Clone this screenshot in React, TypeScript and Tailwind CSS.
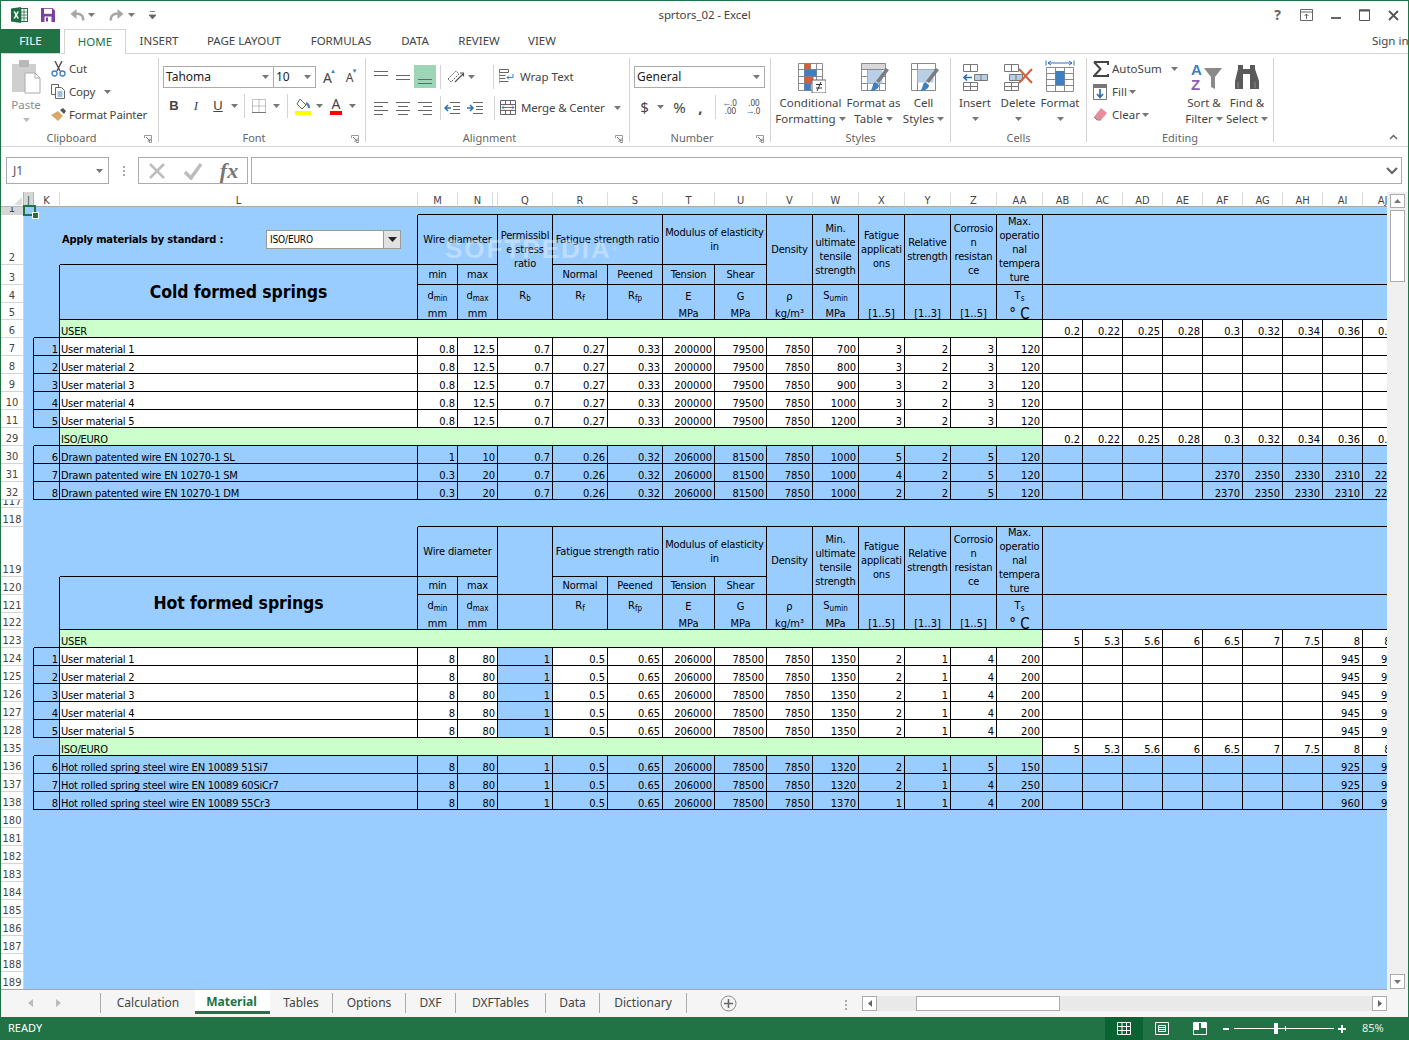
import React from 'react';

function Caret({ className = '' }: { className?: string }) {
  return (
    <svg width="7" height="4" viewBox="0 0 7 4" className={`shrink-0 ${className}`}>
      <path d="M0 0h7L3.5 4z" fill="#777" />
    </svg>
  );
}

function Launcher() {
  return (
    <svg width="8" height="8" viewBox="0 0 8 8" className="absolute right-[6px] bottom-[-1px]">
      <path d="M.5 3V.5H7.5V7.5H5" fill="none" stroke="#999" />
      <path d="M2 2l4 4M6 3.500V6H3.500" fill="none" stroke="#777" />
    </svg>
  );
}

function Vsep({ className = 'h-[20px]' }: { className?: string }) {
  return <span className={`w-px bg-[#d4d4d4] shrink-0 ${className}`} />;
}

function Slot({ w, children }: { w: string; children?: React.ReactNode }) {
  return <span className={`flex items-center justify-center shrink-0 ${w}`}>{children}</span>;
}

function Lines({ y, x }: { y: number[]; x: [number, number][] }) {
  return (
    <svg width="16" height="16" viewBox="0 0 16 16">
      {y.map((v, i) => (
        <path key={i} d={`M${x[i % x.length][0]} ${v}.5H${x[i % x.length][1]}`} stroke="#666" />
      ))}
    </svg>
  );
}

function BigButton({ w, icon, one, two }: { w: string; icon: React.ReactNode; one: string; two?: string }) {
  return (
    <div className={`flex flex-col items-center shrink-0 whitespace-nowrap ${w}`}>
      <div className="h-[30px] mt-[4px] flex items-center justify-center">{icon}</div>
      <div className="mt-[3px] leading-[16px]">{one}</div>
      <div className="leading-[16px] flex items-center gap-[3px] h-[16px]">
        {two}
        <Caret />
      </div>
    </div>
  );
}

function Group({ w, label, launcher, children }: { w: string; label: string; launcher?: boolean; children: React.ReactNode }) {
  return (
    <section className={`relative flex flex-col h-[84px] border-r border-[#d4d4d4] shrink-0 ${w}`}>
      <div className="flex-1 min-h-0">{children}</div>
      <div className={`h-[8px] leading-[8px] text-center text-[11px] text-[#666] ${launcher ? 'pr-[16px]' : ''}`}>{label}</div>
      {launcher && <Launcher />}
    </section>
  );
}

function Dropdown({ w, text }: { w: string; text: string }) {
  return (
    <div className={`h-[22px] border border-[#ababab] bg-white flex items-center justify-between pl-[2px] pr-[4px] text-[12px] text-[#222] shrink-0 ${w}`}>
      {text}
      <Caret />
    </div>
  );
}

function TitleBar() {
  return (
    <div className="h-[28px] grid grid-cols-[1fr_auto_1fr] items-center shrink-0">
      <div className="flex items-center pl-[10px]">
        <svg width="17" height="16" viewBox="0 0 17 16">
          <rect x="7" y="1.500" width="9.500" height="13" fill="#fff" stroke="#217346" />
          <path d="M10 1.500v13M13 1.500v13M7 5h9.500M7 8h9.500M7 11h9.500" stroke="#217346" strokeWidth=".8" />
          <path d="M0 1.500L10 0v16L0 14.500z" fill="#1d6f42" />
          <path d="M2.500 4.500h1.800L5.200 6.800 6.200 4.500H8L6.100 8 8 11.500H6.200L5.200 9.200 4.200 11.500H2.500L4.300 8z" fill="#fff" />
        </svg>
        <svg width="16" height="16" viewBox="0 0 16 16" className="ml-[12px]">
          <path d="M1 1h11.500L15 3.500V15H1z" fill="#7b3f9d" />
          <rect x="4" y="1.800" width="8" height="5" fill="#fff" />
          <rect x="4.500" y="9.500" width="7" height="5.500" fill="#fff" />
          <rect x="6" y="10.500" width="2" height="4" fill="#7b3f9d" />
        </svg>
        <svg width="16" height="14" viewBox="0 0 16 14" className="ml-[13px]">
          <path d="M14 12.500c1-5-3-7.500-8.500-6.500" fill="none" stroke="#a6a6a6" strokeWidth="2.500" />
          <path d="M7.500 1L1.500 6l6 5z" fill="#a6a6a6" />
        </svg>
        <Caret className="ml-[3px]" />
        <svg width="16" height="14" viewBox="0 0 16 14" className="ml-[14px]">
          <path d="M2 12.500c-1-5 3-7.500 8.500-6.500" fill="none" stroke="#a6a6a6" strokeWidth="2.500" />
          <path d="M8.500 1l6 5-6 5z" fill="#a6a6a6" />
        </svg>
        <Caret className="ml-[3px]" />
        <svg width="7" height="9" viewBox="0 0 7 9" className="ml-[14px]">
          <path d="M1 .5h5M0 4h7l-3.500 4z" stroke="#666" fill="#666" strokeWidth=".8" />
        </svg>
      </div>
      <div className="text-[11.5px] text-[#444] tracking-[-0.1px]">sprtors_02 - Excel</div>
      <div className="flex items-center justify-end text-[#666]">
        <span className="w-[29px] text-center text-[14px] font-bold leading-none">?</span>
        <Slot w="w-[29px]">
          <svg width="13" height="12" viewBox="0 0 13 12"><path d="M.5.500h12v11H.500zM.5 3h12M6.500 10V5M4.500 7l2-2 2 2" fill="none" stroke="#666" /></svg>
        </Slot>
        <Slot w="w-[29px]">
          <svg width="10" height="10" viewBox="0 0 10 10"><path d="M0 8h10" stroke="#666" strokeWidth="2" /></svg>
        </Slot>
        <Slot w="w-[29px]">
          <svg width="11" height="12" viewBox="0 0 11 12"><path d="M.5 1h10v10.500H.5z" fill="none" stroke="#555" /><path d="M0 1.500h11" stroke="#555" strokeWidth="2" /></svg>
        </Slot>
        <Slot w="w-[29px]">
          <svg width="11" height="11" viewBox="0 0 11 11"><path d="M1 1l9 9M10 1l-9 9" stroke="#555" strokeWidth="1.800" /></svg>
        </Slot>
      </div>
    </div>
  );
}

function TabRow() {
  const tabs: [string, string][] = [
    ['INSERT', 'w-[66px]'],
    ['PAGE LAYOUT', 'w-[104px]'],
    ['FORMULAS', 'w-[90px]'],
    ['DATA', 'w-[58px]'],
    ['REVIEW', 'w-[70px]'],
    ['VIEW', 'w-[56px]'],
  ];
  return (
    <div className="h-[25px] flex items-stretch border-b border-[#d4d4d4] text-[11.5px] text-[#444] shrink-0">
      <div className="w-[59px] bg-[#217346] text-white flex items-center justify-center">FILE</div>
      <div className="ml-[4px] w-[62px] h-[25px] bg-white border-x border-t border-[#d4d4d4] text-[#217346] flex items-center justify-center">HOME</div>
      {tabs.map(([t, w]) => (
        <div key={t} className={`flex items-center justify-center ${w}`}>{t}</div>
      ))}
      <div className="ml-auto w-[36px] overflow-hidden whitespace-nowrap flex items-center">Sign in</div>
    </div>
  );
}

function Clipboard() {
  return (
    <div className="flex">
      <div className="ml-[8px] w-[34px] flex flex-col items-center">
        <svg width="30" height="34" viewBox="0 0 30 34" className="mt-[2px]">
          <rect x="1" y="4" width="24" height="28" fill="#d0cfd0" />
          <rect x="8" y="0" width="10" height="7" fill="#b9b8b9" />
          <path d="M14 13h10l5 5v15H14z" fill="#fff" stroke="#aaa" />
          <path d="M24 13v5h5" fill="none" stroke="#aaa" />
        </svg>
        <div className="text-[11.5px] text-[#8b8b8b] leading-[16px] mt-[3px]">Paste</div>
        <Caret className="mt-[5px] opacity-50" />
      </div>
      <div className="ml-[8px] -mt-[1px] text-[11.5px] text-[#444] tracking-[-0.2px]">
        <div className="h-[23px] flex items-center">
          <svg width="15" height="16" viewBox="0 0 15 16" className="mr-[3px]">
            <path d="M4 0l5 10M11 0L6 10" stroke="#555" strokeWidth="1.500" />
            <circle cx="3.500" cy="12.500" r="2.500" fill="none" stroke="#3d7fc1" strokeWidth="1.300" />
            <circle cx="11.500" cy="12.500" r="2.500" fill="none" stroke="#3d7fc1" strokeWidth="1.300" />
          </svg>
          Cut
        </div>
        <div className="h-[23px] flex items-center">
          <svg width="15" height="15" viewBox="0 0 15 15" className="mr-[3px]">
            <path d="M.5.500h7v3M.5.500v10h4" fill="#fff" stroke="#666" />
            <path d="M4.500 3.500h6l3 3v8h-9z" fill="#fff" stroke="#666" />
            <path d="M6.500 8h5M6.500 10h5M6.500 12h5" stroke="#3d7fc1" />
          </svg>
          Copy
          <Caret className="ml-[9px]" />
        </div>
        <div className="h-[23px] flex items-center">
          <svg width="16" height="14" viewBox="0 0 16 14" className="mr-[2px]">
            <path d="M0 7l7-4 5 5-5 5z" fill="#d7a86a" />
            <path d="M9 2l3-2 3 3-2 3z" fill="#555" />
          </svg>
          Format Painter
        </div>
      </div>
    </div>
  );
}

function FontGroup() {
  return (
    <div className="pl-[4px] pt-[8px]">
      <div className="flex items-center">
        <Dropdown w="w-[111px]" text="Tahoma" />
        <Dropdown w="w-[43px] -ml-px" text="10" />
        <Slot w="w-[23px] text-[14px] text-[#444]">
          <span className="relative">A<span className="absolute -right-[4px] top-0 text-[6px] text-[#3d7fc1]">▲</span></span>
        </Slot>
        <Slot w="w-[21px] text-[12px] text-[#444]">
          <span className="relative mt-[2px]">A<span className="absolute -right-[4px] -top-[2px] text-[6px] text-[#3d7fc1]">▼</span></span>
        </Slot>
      </div>
      <div className="flex items-center mt-[8px] h-[20px] text-[12px] text-[#444]">
        <Slot w="w-[22px] font-bold font-['Liberation_Sans',sans-serif] text-[13px]">B</Slot>
        <Slot w="w-[22px] italic font-['Liberation_Serif',serif] text-[13px]">I</Slot>
        <Slot w="w-[22px] underline font-['Liberation_Sans',sans-serif] text-[13px]">U</Slot>
        <Caret className="ml-[2px]" />
        <span className="w-[6px]" />
        <Vsep className="h-[24px]" />
        <Slot w="w-[28px]">
          <svg width="14" height="14" viewBox="0 0 14 14"><path d="M.5.500h13v13H.500zM7 .5v13M.5 7h13" fill="none" stroke="#888" strokeDasharray="1 1" /><path d="M0 13.500h14" stroke="#777" /></svg>
        </Slot>
        <Caret />
        <span className="w-[7px]" />
        <Vsep className="h-[24px]" />
        <Slot w="w-[30px]">
          <svg width="16" height="18" viewBox="0 0 16 18">
            <path d="M5 2l6 6-4 4-5-5z" fill="#fff" stroke="#666" />
            <path d="M11 6c2 1 3 3 3 5" fill="none" stroke="#3d7fc1" strokeWidth="2" />
            <rect x="0" y="14" width="16" height="4" fill="#ffff00" />
          </svg>
        </Slot>
        <Caret className="-ml-[2px]" />
        <Slot w="w-[26px]">
          <span className="relative text-[14px] leading-[14px] pb-[4px] px-[2px]">
            A<span className="absolute left-0 right-0 bottom-0 h-[4px] bg-[#ff0000]" />
          </span>
        </Slot>
        <Caret />
      </div>
    </div>
  );
}

function AlignmentGroup() {
  return (
    <div className="pl-[4px] pt-[7px] text-[11.5px] text-[#444]">
      <div className="flex items-center h-[23px]">
        <Slot w="w-[22px]"><Lines y={[2, 6]} x={[[1, 15]]} /></Slot>
        <Slot w="w-[22px]"><Lines y={[6, 10]} x={[[1, 15]]} /></Slot>
        <Slot w="w-[22px] h-[23px] bg-[#9fd5b7]"><Lines y={[10, 14]} x={[[1, 15]]} /></Slot>
        <span className="w-[4px]" />
        <Vsep className="h-[24px]" />
        <Slot w="w-[30px]">
          <svg width="18" height="16" viewBox="0 0 18 16">
            <path d="M1 10l8-8 3 3-8 8z" fill="none" stroke="#666" strokeDasharray="2 1" />
            <path d="M8 13l8-8M13 4h3.500v3.500" fill="none" stroke="#555" strokeWidth="1.200" />
          </svg>
        </Slot>
        <Caret className="-ml-[3px]" />
        <span className="w-[18px]" />
        <Vsep className="h-[24px]" />
        <Slot w="w-[26px]">
          <svg width="16" height="15" viewBox="0 0 16 15">
            <path d="M.5.500h9v3h-9zM.5 6.500h6M.5 9.500h6M.5 12.500h9" fill="none" stroke="#666" />
            <path d="M0 .5v14" stroke="#666" />
            <path d="M14 5v3.500H8M10 6.500l-2 2 2 2" fill="none" stroke="#3d7fc1" />
          </svg>
        </Slot>
        Wrap Text
      </div>
      <div className="flex items-center h-[23px] mt-[8px]">
        <Slot w="w-[22px]"><Lines y={[2, 6, 10, 14]} x={[[1, 15], [1, 10]]} /></Slot>
        <Slot w="w-[22px]"><Lines y={[2, 6, 10, 14]} x={[[1, 15], [3, 13]]} /></Slot>
        <Slot w="w-[22px]"><Lines y={[2, 6, 10, 14]} x={[[1, 15], [6, 15]]} /></Slot>
        <span className="w-[4px]" />
        <Vsep className="h-[24px]" />
        <Slot w="w-[22px]">
          <svg width="16" height="12" viewBox="0 0 16 12"><path d="M6 .5h10M9 4.500h7M9 7.500h7M6 11.500h10" stroke="#666" /><path d="M7 6H1M4 3L1 6l3 3" fill="none" stroke="#2a70b8" strokeWidth="1.500" /></svg>
        </Slot>
        <Slot w="w-[24px]">
          <svg width="16" height="12" viewBox="0 0 16 12"><path d="M6 .5h10M9 4.500h7M9 7.500h7M6 11.500h10" stroke="#666" /><path d="M0 6h6M3 3l3 3-3 3" fill="none" stroke="#2a70b8" strokeWidth="1.500" /></svg>
        </Slot>
        <span className="w-[7px]" />
        <Vsep className="h-[24px]" />
        <Slot w="w-[26px]">
          <svg width="16" height="15" viewBox="0 0 16 15">
            <path d="M.5.500h15v14H.500zM.5 4.500h15M.5 10.500h15M5.500.5v4M10.500.5v4M5.500 10.500v4M10.500 10.500v4" fill="none" stroke="#666" />
            <path d="M2 7.500h12M4 5.500l-2 2 2 2M12 5.500l2 2-2 2" fill="none" stroke="#3d7fc1" />
          </svg>
        </Slot>
        <span className="tracking-[-0.15px]">Merge &amp; Center</span>
        <Caret className="ml-[9px]" />
      </div>
    </div>
  );
}

function NumberGroup() {
  return (
    <div className="pl-[4px] pt-[8px] text-[#444]">
      <Dropdown w="w-[131px]" text="General" />
      <div className="flex items-center mt-[8px] h-[22px] text-[15px]">
        <Slot w="w-[21px]">$</Slot>
        <Caret className="ml-[2px]" />
        <Slot w="w-[31px]">%</Slot>
        <Slot w="w-[11px] font-bold">,</Slot>
        <span className="w-[9px]" />
        <Vsep className="h-[24px]" />
        <Slot w="w-[27px]">
          <span className="relative text-[8px] leading-[8px] text-center">
            <span className="block pl-[8px]">.0</span>
            <span className="block pl-[2px]">.00</span>
            <span className="absolute left-0 top-0 text-[#2a70b8] text-[9px]">←</span>
          </span>
        </Slot>
        <Slot w="w-[20px]">
          <span className="relative text-[8px] leading-[8px] text-center">
            <span className="block pl-[2px]">.00</span>
            <span className="block pl-[8px]">.0</span>
            <span className="absolute left-0 bottom-0 text-[#2a70b8] text-[9px]">→</span>
          </span>
        </Slot>
      </div>
    </div>
  );
}

function Grid5({ children }: { children?: React.ReactNode }) {
  return (
    <svg width="31" height="31" viewBox="0 0 31 31">
      <path d="M3.500 1.500h24v27h-24zM3.500 7.500h24M3.500 14.500h24M3.500 21.500h24M9.500 1.500v27M15.500 1.500v27M21.500 1.500v27" fill="#fff" stroke="#8a8a8a" />
      {children}
    </svg>
  );
}

function Brush() {
  return (
    <g>
      <path d="M31 8L21 21l-3-2L28 6z" fill="#7c7c7c" />
      <path d="M17 20l4 3c0 4-5 6-9 6 3-2 2-7 5-9z" fill="#3d7fc1" />
    </g>
  );
}

function Styles() {
  return (
    <div className="flex pl-[4px] text-[11.5px] text-[#444]">
      <BigButton
        w="w-[71px]"
        one="Conditional"
        two="Formatting"
        icon={
          <Grid5>
            <rect x="9.500" y="1.500" width="6" height="6" fill="#d2603d" />
            <rect x="9.500" y="7.500" width="12" height="7" fill="#3d7fc1" />
            <rect x="9.500" y="14.500" width="9" height="7" fill="#d2603d" />
            <rect x="9.500" y="21.500" width="6" height="7" fill="#3d7fc1" />
            <rect x="17" y="18" width="14" height="13" fill="#fff" stroke="#666" />
            <path d="M21 22.500h6M21 26h6M26 20l-4 9" stroke="#333" fill="none" />
          </Grid5>
        }
      />
      <BigButton
        w="w-[55px]"
        one="Format as"
        two="Table"
        icon={
          <Grid5>
            <rect x="9.500" y="7.500" width="15" height="14" fill="#b9cfe6" />
            <path d="M3.500 1.500h24v6h-24z" fill="#d8d8d8" stroke="#8a8a8a" />
            <Brush />
          </Grid5>
        }
      />
      <BigButton
        w="w-[45px]"
        one="Cell"
        two="Styles"
        icon={
          <svg width="31" height="31" viewBox="0 0 31 31">
            <path d="M3.500 1.500h24v27h-24zM3.500 7.500h24M9.500 1.500v27" fill="#fff" stroke="#8a8a8a" />
            <rect x="9.500" y="7.500" width="16" height="13" fill="#b9cfe6" />
            <Brush />
          </svg>
        }
      />
    </div>
  );
}

function Cells() {
  return (
    <div className="flex pl-[2px] text-[11.5px] text-[#444]">
      <BigButton
        w="w-[44px]"
        one="Insert"
        icon={
          <svg width="28" height="28" viewBox="0 0 28 28">
            <path d="M2.500 1.500h14v7h-14zM9.500 1.500v7M2.500 19.500h14v8h-14zM9.500 19.500v8M2.500 23.500h14" fill="#fff" stroke="#777" />
            <path d="M13.500 11.500h13v6h-13zM20 11.500v6" fill="#b9cfe6" stroke="#777" />
            <path d="M11 14.500H3M6 11.500l-3 3 3 3" fill="none" stroke="#2a70b8" strokeWidth="1.700" />
          </svg>
        }
      />
      <BigButton
        w="w-[42px]"
        one="Delete"
        icon={
          <svg width="30" height="28" viewBox="0 0 30 28">
            <path d="M1.500 1.500h14v7h-14zM8.500 1.500v7M1.500 19.500h14v8h-14zM8.500 19.500v8M1.500 23.500h14" fill="#fff" stroke="#777" />
            <path d="M6.500 11.500h13v6h-13zM13 11.500v6" fill="#b9cfe6" stroke="#777" />
            <path d="M16 6l13 14M29 6L16 20" stroke="#d2603d" strokeWidth="2" />
          </svg>
        }
      />
      <BigButton
        w="w-[42px]"
        one="Format"
        icon={
          <svg width="30" height="32" viewBox="0 0 30 32" className="-mt-[2px]">
            <path d="M1 .5v5M29 .5v5M3 3h24M6 1l-3 2 3 2M24 1l3 2-3 2" fill="none" stroke="#2a70b8" />
            <path d="M1.500 7.500h27v24h-27zM1.500 13.500h27M1.500 19.500h27M1.500 25.500h27M10.500 7.500v24M19.500 7.500v24" fill="#fff" stroke="#8a8a8a" />
            <rect x="10.500" y="11" width="9" height="14" fill="#3d7fc1" />
          </svg>
        }
      />
    </div>
  );
}

function Editing() {
  return (
    <div className="flex text-[11.5px] text-[#444]">
      <div className="ml-[6px] w-[89px] -mt-[1px] shrink-0">
        <div className="h-[23px] flex items-center">
          <svg width="16" height="16" viewBox="0 0 16 16" className="mr-[3px]">
            <path d="M1 1h14v3M15 13v2H1l6.500-7L1 1" fill="none" stroke="#444" strokeWidth="2" />
          </svg>
          AutoSum
          <Caret className="ml-[9px]" />
        </div>
        <div className="h-[23px] flex items-center">
          <svg width="14" height="16" viewBox="0 0 14 16" className="mr-[5px]">
            <path d="M.5 3.500h13v12H.500z" fill="#fff" stroke="#777" />
            <rect x="0" y="0" width="14" height="4" fill="#777" />
            <path d="M7 5v8M4 10l3 3.500L10 10" fill="none" stroke="#2a70b8" strokeWidth="1.700" />
          </svg>
          Fill
          <Caret className="ml-[2px]" />
        </div>
        <div className="h-[23px] flex items-center">
          <svg width="14" height="14" viewBox="0 0 14 14" className="mr-[5px]">
            <path d="M8 0l6 5-6 7H4L1 9z" fill="#e88b9a" />
            <path d="M1 9l3 3h4" fill="none" stroke="#888" />
          </svg>
          Clear
          <Caret className="ml-[2px]" />
        </div>
      </div>
      <BigButton
        w="w-[44px]"
        one="Sort &"
        two="Filter"
        icon={
          <span className="relative block w-[32px] h-[30px] font-['Liberation_Sans',sans-serif] font-bold text-[15px] leading-[15px]">
            <span className="absolute left-[3px] top-0 text-[#3d7fc1]">A</span>
            <span className="absolute left-[3px] top-[15px] text-[#8e5bb5]">Z</span>
            <svg width="18" height="22" viewBox="0 0 18 22" className="absolute right-[-2px] top-[6px]">
              <path d="M0 0h18l-7 9v12l-4-2V9z" fill="#8a8a8a" />
            </svg>
          </span>
        }
      />
      <BigButton
        w="w-[42px]"
        one="Find &"
        two="Select"
        icon={
          <svg width="26" height="26" viewBox="0 0 26 26">
            <path d="M4 5V1h5v4h7V1h5v4l4 12v8h-9V10h-7v15H1v-8z" fill="#5a5a5a" />
            <path d="M4 18v6M21 18v6" stroke="#8a8a8a" />
          </svg>
        }
      />
    </div>
  );
}

function Ribbon() {
  return (
    <div className="h-[93px] pt-[4px] border-b border-[#d4d4d4] flex relative shrink-0">
      <Group w="w-[158px]" label="Clipboard" launcher><Clipboard /></Group>
      <Group w="w-[207px]" label="Font" launcher><FontGroup /></Group>
      <Group w="w-[264px]" label="Alignment" launcher><AlignmentGroup /></Group>
      <Group w="w-[141px]" label="Number" launcher><NumberGroup /></Group>
      <Group w="w-[180px]" label="Styles"><Styles /></Group>
      <Group w="w-[136px]" label="Cells"><Cells /></Group>
      <Group w="w-[187px]" label="Editing"><Editing /></Group>
      <svg width="9" height="6" viewBox="0 0 9 6" className="ml-[115px] mt-[76px]">
        <path d="M1 5l3.500-3.500L8 5" fill="none" stroke="#666" strokeWidth="1.500" />
      </svg>
    </div>
  );
}

function FormulaBar() {
  return (
    <div className="h-[27px] flex items-stretch mt-[10px] mb-[8px] shrink-0">
      <div className="ml-[5px] w-[103px] border border-[#ababab] flex items-center justify-between pl-[6px] pr-[5px] text-[12px] text-[#555]">
        J1
        <Caret />
      </div>
      <div className="w-[29px] flex flex-col items-center justify-center gap-[2px]">
        <span className="w-[2px] h-[2px] bg-[#aaa]" />
        <span className="w-[2px] h-[2px] bg-[#aaa]" />
        <span className="w-[2px] h-[2px] bg-[#aaa]" />
      </div>
      <div className="w-[110px] border border-[#ababab] flex items-center">
        <Slot w="w-[36px]">
          <svg width="18" height="18" viewBox="0 0 18 18"><path d="M2 2l14 14M16 2L2 16" stroke="#bdbdbd" strokeWidth="2.500" /></svg>
        </Slot>
        <Slot w="w-[36px]">
          <svg width="20" height="18" viewBox="0 0 20 18"><path d="M2 10l6 6L18 2" fill="none" stroke="#bdbdbd" strokeWidth="3.500" /></svg>
        </Slot>
        <Slot w="w-[36px] font-['Liberation_Serif',serif] italic font-bold text-[22px] text-[#777] leading-none">fx</Slot>
      </div>
      <div className="ml-[3px] w-[1151px] border border-[#ababab] flex items-center justify-end pr-[3px]">
        <svg width="12" height="8" viewBox="0 0 12 8"><path d="M1 1l5 5 5-5" fill="none" stroke="#666" strokeWidth="2.200" /></svg>
      </div>
    </div>
  );
}

const TAIL_HEAD = ['AB', 'AC', 'AD', 'AE', 'AF', 'AG', 'AH', 'AI', 'AJ'];
const HEADS = ['J', 'K', 'L', 'M', 'N', 'Q', 'R', 'S', 'T', 'U', 'V', 'W', 'X', 'Y', 'Z', 'AA', ...TAIL_HEAD];
const WIDTHS = ['w-[23px]', 'w-[10px]', 'w-[26px]', 'w-[358px]', 'w-[40px]', 'w-[40px]', 'w-[55px]', 'w-[55px]', 'w-[55px]', 'w-[52px]', 'w-[52px]', 'w-[46px]', 'w-[46px]', 'w-[46px]', 'w-[46px]', 'w-[46px]', 'w-[46px]', 'w-[40px]', 'w-[40px]', 'w-[40px]', 'w-[40px]', 'w-[40px]', 'w-[40px]', 'w-[40px]', 'w-[40px]', 'w-[40px]'];

const BL = 'border-r border-b border-black';
const HB = `${BL} p-0 text-center align-bottom whitespace-pre overflow-hidden leading-[10px]`;
const NUM = `${BL} p-0 pr-[2px] text-right align-bottom leading-[10px]`;

// header cell whose text may be taller than its row, so the rows keep their height
function HeadCell({ colSpan, rowSpan, children }: { colSpan?: number; rowSpan?: number; children?: React.ReactNode }) {
  return (
    <td colSpan={colSpan} rowSpan={rowSpan} className={`${BL} p-0 text-center align-middle whitespace-pre tracking-[-0.15px]`}>
      <div className="-my-[4px]">{children}</div>
    </td>
  );
}

function RowHead({ n, active, clip }: { n: string; active?: boolean; clip?: boolean }) {
  return (
    <td className={`p-0 border-b border-r border-[#d4d4d4] text-center align-bottom text-[#444] ${active ? 'bg-[#d6d6d6]' : 'bg-white'}`}>
      {clip ? <div className="h-[7px] overflow-hidden flex items-end justify-center leading-[11px]">{n}</div> : <div className="leading-[12px]">{n}</div>}
    </td>
  );
}

function Sub({ main, sub }: { main: string; sub: string }) {
  return (
    <span>
      {main}
      <span className="text-[8px] relative top-[2px]">{sub}</span>
    </span>
  );
}

function BlockHeader({ rows, title, cold }: { rows: string[]; title: string; cold?: boolean }) {
  return (
    <>
      <tr className="h-[50px]">
        <RowHead n={rows[0]} />
        <td className="p-0" />
        <td className="p-0" />
        <td className="p-0 border-r border-b border-black align-middle">
          {cold && (
            <div className="flex items-center pl-[2px] tracking-[-0.15px]">
              <span className="w-[204px] font-bold">Apply materials by standard :</span>
              <div className="w-[135px] h-[19px] bg-white border border-[#9a9a9a] flex items-center justify-between text-[10px]">
                <span className="pl-[3px]">ISO/EURO</span>
                <span className="w-[17px] h-full bg-[#e1e1e1] border-l border-[#9a9a9a] flex items-center justify-center">
                  <svg width="9" height="5" viewBox="0 0 9 5"><path d="M0 0h9L4.500 5z" fill="#222" /></svg>
                </span>
              </div>
            </div>
          )}
        </td>
        <HeadCell colSpan={2}>Wire diameter</HeadCell>
        <HeadCell rowSpan={2}>{cold ? 'Permissibl\ne stress\nratio' : ''}</HeadCell>
        <HeadCell colSpan={2}>Fatigue strength ratio</HeadCell>
        <HeadCell colSpan={2}>Modulus of elasticity{'\n'}in</HeadCell>
        <HeadCell rowSpan={2}>Density</HeadCell>
        <HeadCell rowSpan={2}>{'Min.\nultimate\ntensile\nstrength'}</HeadCell>
        <HeadCell rowSpan={2}>{'Fatigue\napplicati\nons'}</HeadCell>
        <HeadCell rowSpan={2}>{'Relative\nstrength'}</HeadCell>
        <HeadCell rowSpan={2}>{'Corrosio\nn\nresistan\nce'}</HeadCell>
        <HeadCell rowSpan={2}>{'Max.\noperatio\nnal\ntempera\nture'}</HeadCell>
        <td rowSpan={2} colSpan={9} className="p-0 border-b border-black" />
      </tr>
      <tr className={cold ? 'h-[20px]' : 'h-[18px]'}>
        <RowHead n={rows[1]} />
        <td className="p-0" />
        <td className="p-0 border-r border-black" />
        <td rowSpan={3} className={`${BL} p-0 text-center align-middle whitespace-pre font-bold text-[17.5px] tracking-[-0.1px]`}>{title}</td>
        <HeadCell>min</HeadCell>
        <HeadCell>max</HeadCell>
        <HeadCell>Normal</HeadCell>
        <HeadCell>Peened</HeadCell>
        <HeadCell>Tension</HeadCell>
        <HeadCell>Shear</HeadCell>
      </tr>
      <tr className="h-[18px]">
        <RowHead n={rows[2]} />
        <td className="p-0" />
        <td className="p-0 border-r border-black" />
        {[
          <Sub main="d" sub="min" />,
          <Sub main="d" sub="max" />,
          cold ? <Sub main="R" sub="b" /> : '',
          <Sub main="R" sub="f" />,
          <Sub main="R" sub="fp" />,
          'E',
          'G',
          'ρ',
          <Sub main="S" sub="umin" />,
          '',
          '',
          '',
          <Sub main="T" sub="s" />,
        ].map((c, i) => (
          <td key={i} className="p-0 border-r border-black text-center align-bottom leading-[12px]">{c}</td>
        ))}
        <td rowSpan={2} colSpan={9} className="p-0 border-b border-black" />
      </tr>
      <tr className="h-[17px]">
        <RowHead n={rows[3]} />
        <td className="p-0" />
        <td className="p-0 border-r border-black" />
        {['mm', 'mm', '', '', '', 'MPa', 'MPa', 'kg/m³', 'MPa', '[1..5]', '[1..3]', '[1..5]'].map((c, i) => (
          <td key={i} className={HB}>{c}</td>
        ))}
        <td className={`${HB} text-[15px]`}>° C</td>
      </tr>
    </>
  );
}

function GroupRow({ n, label, tail }: { n: string; label: string; tail: string[] }) {
  return (
    <tr className="h-[18px]">
      <RowHead n={n} />
      <td className="p-0" />
      <td className="p-0 border-r border-b border-black" />
      <td colSpan={14} className={`${BL} p-0 pl-[1px] bg-[#ccffcc] align-bottom leading-[10px] tracking-[-0.2px]`}>{label}</td>
      {tail.map((t, i) => (
        <td key={i} className={`${NUM} bg-white`}>{t}</td>
      ))}
    </tr>
  );
}

type DataProps = { n: string; idx: number; name: string; vals: (string | number)[]; tail?: string[]; white?: boolean; blueQ?: boolean };

function DataRow({ n, idx, name, vals, tail, white, blueQ }: DataProps) {
  const bg = white ? 'bg-white' : '';
  const cells = tail ?? Array<string>(9).fill('');
  return (
    <tr className="h-[18px]">
      <RowHead n={n} />
      <td className="p-0 border-r border-black" />
      <td className={`${BL} p-0 pr-[1px] text-right align-bottom leading-[10px]`}>{idx}</td>
      <td className={`${BL} p-0 pl-[1px] align-bottom leading-[10px] whitespace-nowrap tracking-[-0.2px] ${bg}`}>{name}</td>
      {vals.map((v, i) => (
        <td key={i} className={`${NUM} ${i === 2 && blueQ ? '' : bg}`}>{v}</td>
      ))}
      {cells.map((v, i) => (
        <td key={i} className={`${NUM} whitespace-nowrap ${bg}`}>{v}</td>
      ))}
    </tr>
  );
}

const t1 = ['0.2', '0.22', '0.25', '0.28', '0.3', '0.32', '0.34', '0.36', '0.38'];
const t2 = ['5', '5.3', '5.6', '6', '6.5', '7', '7.5', '8', '8.5'];
const wire = ['', '', '', '', '2370', '2350', '2330', '2310', '2290'];
const tailHot = (v: string) => ['', '', '', '', '', '', '', v, v];

function Sheet() {
  const coldBase = [0.8, 12.5, 0.7, 0.27, 0.33, 200000, 79500, 7850];
  const hotBase = [8, 80, 1, 0.5, 0.65, 206000, 78500, 7850];
  const iso = [0.7, 0.26, 0.32, 206000, 81500, 7850, 1000];
  const rest = ['180', '181', '182', '183', '184', '185', '186', '187', '188', '189'];
  return (
    <div className="relative w-[1386px] h-[798px] overflow-hidden border-b border-[#a8a8a8] bg-[#99ccff] shrink-0">
      <table className="table-fixed w-[1402px] border-separate border-spacing-0 bg-[#99ccff] text-[11px] leading-[14px] text-black font-['DejaVu_Sans','DejaVu_Sans_Condensed',sans-serif] [font-stretch:condensed]">
        <colgroup>
          {WIDTHS.map((w, i) => (
            <col key={i} className={w} />
          ))}
        </colgroup>
        <tbody>
          <tr className="h-[15px] bg-white text-[#444]">
            <td className="p-0 border-b border-r border-[#b4b4b4]">
              <svg width="8" height="8" viewBox="0 0 8 8" className="ml-[13px] mt-[4px]"><path d="M8 0v8H0z" fill="#dcdcdc" /></svg>
            </td>
            {HEADS.map((h, i) => (
              <td
                key={h}
                className={`p-0 pt-[3px] leading-[11px] text-center border-r border-b ${h === 'J' ? 'bg-[#d6d6d6] text-[#217346] border-b-[#217346] border-r-[#b4b4b4] shadow-[inset_0_-1px_0_0_#217346]' : 'border-b-[#a8a8a8] border-r-[#dcdcdc]'} ${i === 4 ? 'shadow-[inset_-4px_0_0_0_#fff,inset_-5px_0_0_0_#dcdcdc]' : ''}`}
              >
                {h}
              </td>
            ))}
          </tr>
          <tr className="h-[8px]">
            <RowHead n="1" active clip />
            <td className="p-0" colSpan={3} />
            <td colSpan={22} className="p-0 border-b border-black" />
          </tr>
          <BlockHeader rows={['2', '3', '4', '5']} title="Cold formed springs" cold />
          <GroupRow n="6" label="USER" tail={t1} />
          {[700, 800, 900, 1000, 1200].map((s, i) => (
            <DataRow key={s} n={String(7 + i)} idx={i + 1} name={`User material ${i + 1}`} white vals={[...coldBase, s, 3, 2, 3, 120]} />
          ))}
          <GroupRow n="29" label="ISO/EURO" tail={t1} />
          <DataRow n="30" idx={6} name="Drawn patented wire EN 10270-1 SL" vals={[1, 10, ...iso, 5, 2, 5, 120]} />
          <DataRow n="31" idx={7} name="Drawn patented wire EN 10270-1 SM" vals={[0.3, 20, ...iso, 4, 2, 5, 120]} tail={wire} />
          <DataRow n="32" idx={8} name="Drawn patented wire EN 10270-1 DM" vals={[0.3, 20, ...iso, 2, 2, 5, 120]} tail={wire} />
          <tr className="h-[8px]">
            <RowHead n="117" clip />
            <td colSpan={25} className="p-0" />
          </tr>
          <tr className="h-[19px]">
            <RowHead n="118" />
            <td colSpan={3} className="p-0" />
            <td colSpan={22} className="p-0 border-b border-black" />
          </tr>
          <BlockHeader rows={['119', '120', '121', '122']} title="Hot formed springs" />
          <GroupRow n="123" label="USER" tail={t2} />
          {[1, 2, 3, 4, 5].map((i) => (
            <DataRow key={i} n={String(123 + i)} idx={i} name={`User material ${i}`} white blueQ vals={[...hotBase, 1350, 2, 1, 4, 200]} tail={tailHot('945')} />
          ))}
          <GroupRow n="135" label="ISO/EURO" tail={t2} />
          <DataRow n="136" idx={6} name="Hot rolled spring steel wire EN 10089 51Si7" vals={[...hotBase, 1320, 2, 1, 5, 150]} tail={tailHot('925')} />
          <DataRow n="137" idx={7} name="Hot rolled spring steel wire EN 10089 60SiCr7" vals={[...hotBase, 1320, 2, 1, 4, 250]} tail={tailHot('925')} />
          <DataRow n="138" idx={8} name="Hot rolled spring steel wire EN 10089 55Cr3" vals={[...hotBase, 1370, 1, 1, 4, 200]} tail={tailHot('960')} />
          {rest.map((n) => (
            <tr key={n} className="h-[18px]">
              <RowHead n={n} />
              <td colSpan={25} className="p-0" />
            </tr>
          ))}
        </tbody>
      </table>
      {/* active cell J1 */}
      <div className="absolute left-[22px] top-[13px] w-[13px] h-[11px] border-2 border-[#217346] bg-[#99ccff]" />
      <div className="absolute left-[31px] top-[20px] w-[5px] h-[5px] bg-[#217346] border border-white box-content" />
      {/* watermark */}
      <div className="absolute left-[444px] top-[39px] text-white/35 font-bold text-[26px] leading-[36px] tracking-[2px] font-['Liberation_Sans',sans-serif] pointer-events-none">
        SOFTPEDIA<span className="text-[8px] align-top font-normal tracking-normal">®</span>
      </div>
    </div>
  );
}

function VScroll() {
  return (
    <div className="w-[21px] h-[798px] bg-[#f0f0f0] flex flex-col items-center pt-[2px] pb-[1px] shrink-0">
      <div className="w-[15px] h-[14px] bg-white border border-[#ababab] flex items-center justify-center">
        <svg width="7" height="4" viewBox="0 0 7 4"><path d="M0 4h7L3.500 0z" fill="#777" /></svg>
      </div>
      <div className="w-[15px] h-[72px] mt-[2px] bg-white border border-[#ababab]" />
      <div className="mt-auto w-[15px] h-[15px] bg-white border border-[#ababab] flex items-center justify-center">
        <Caret />
      </div>
    </div>
  );
}

function SheetTabs() {
  const tabs: [string, string][] = [
    ['Calculation', 'w-[94px]'],
    ['Material', 'w-[75px]'],
    ['Tables', 'w-[63px]'],
    ['Options', 'w-[73px]'],
    ['DXF', 'w-[50px]'],
    ['DXFTables', 'w-[90px]'],
    ['Data', 'w-[54px]'],
    ['Dictionary', 'w-[87px]'],
  ];
  return (
    <div className="h-[27px] bg-[#f5f5f5] flex items-start text-[12px] text-[#444] shrink-0">
      <div className="w-[100px] h-[20px] mt-[3px] border-r border-[#ababab] flex items-center pl-[27px] gap-[23px]">
        <svg width="5" height="8" viewBox="0 0 5 8"><path d="M5 0v8L0 4z" fill="#bbb" /></svg>
        <svg width="5" height="8" viewBox="0 0 5 8"><path d="M0 0v8l5-4z" fill="#bbb" /></svg>
      </div>
      {tabs.map(([t, w]) =>
        t === 'Material' ? (
          <div key={t} className={`${w} h-[24px] pt-[2px] pr-[2px] bg-white border-b-[3px] border-[#217346] text-[#217346] font-bold flex items-center justify-center`}>
            {t}
          </div>
        ) : (
          <div key={t} className={`${w} h-[20px] mt-[3px] ${t === 'Calculation' ? '' : 'border-r border-[#ababab]'} flex items-center justify-center`}>
            {t}
          </div>
        ),
      )}
      <svg width="17" height="17" viewBox="0 0 17 17" className="ml-[33px] mt-[5px] shrink-0">
        <circle cx="8.500" cy="8.500" r="7.500" fill="none" stroke="#888" />
        <path d="M8.500 4v9M4 8.500h9" stroke="#666" strokeWidth="1.600" />
      </svg>
      <div className="ml-[108px] mt-[10px] flex flex-col gap-[2px]">
        <span className="w-[2px] h-[2px] bg-[#aaa]" />
        <span className="w-[2px] h-[2px] bg-[#aaa]" />
        <span className="w-[2px] h-[2px] bg-[#aaa]" />
      </div>
      <div className="ml-[15px] mt-[6px] w-[525px] h-[15px] bg-[#e9e9e9] flex shrink-0">
        <div className="w-[15px] bg-white border border-[#ababab] flex items-center justify-center">
          <svg width="4" height="7" viewBox="0 0 4 7"><path d="M4 0v7L0 3.500z" fill="#666" /></svg>
        </div>
        <div className="ml-[39px] w-[144px] bg-white border border-[#ababab]" />
        <div className="ml-auto w-[15px] bg-white border border-[#ababab] flex items-center justify-center">
          <svg width="4" height="7" viewBox="0 0 4 7"><path d="M0 0v7l4-3.500z" fill="#666" /></svg>
        </div>
      </div>
    </div>
  );
}

function StatusBar() {
  return (
    <div className="h-[23px] bg-[#217346] text-white text-[11px] flex items-center shrink-0">
      <span className="ml-[7px]">READY</span>
      <div className="ml-auto flex items-center h-full">
        <Slot w="w-[38px] h-full bg-[#0a6332]">
          <svg width="14" height="13" viewBox="0 0 14 13"><path d="M.5.500h13v12H.500zM5 .5v12M9.500.5v12M.5 4.500h13M.5 8.500h13" fill="none" stroke="#fff" /></svg>
        </Slot>
        <Slot w="w-[38px]">
          <svg width="14" height="13" viewBox="0 0 14 13"><path d="M.5.500h13v12H.500zM3.500 3.500h7v6h-7zM3.500 5.500h7M3.500 7.500h7" fill="none" stroke="#fff" /></svg>
        </Slot>
        <Slot w="w-[38px]">
          <svg width="14" height="13" viewBox="0 0 14 13">
            <path d="M.5.500h13v12H.500z" fill="none" stroke="#fff" />
            <path d="M1 1h5v7H1zM8 1h5v5H8z" fill="#fff" />
          </svg>
        </Slot>
        <svg width="6" height="2" viewBox="0 0 6 2" className="ml-[4px]"><path d="M0 1h6" stroke="#fff" strokeWidth="2" /></svg>
        <div className="relative w-[100px] h-px bg-white ml-[5px]">
          <span className="absolute left-[40px] -top-[5px] w-[4px] h-[11px] bg-white" />
          <span className="absolute left-[51px] -top-[2px] w-px h-[5px] bg-white" />
        </div>
        <svg width="8" height="8" viewBox="0 0 8 8" className="ml-[4px]"><path d="M4 0v8M0 4h8" stroke="#fff" strokeWidth="2" /></svg>
        <span className="ml-[16px] w-[46px] text-[#e6efe9]">85%</span>
      </div>
    </div>
  );
}

export default function App() {
  return (
    <div className="w-[1409px] h-[1040px] flex flex-col border-x border-t border-[#217346] bg-white overflow-hidden font-['Noto_Sans',sans-serif]">
      <TitleBar />
      <TabRow />
      <Ribbon />
      <FormulaBar />
      <div className="flex h-[798px] shrink-0">
        <Sheet />
        <VScroll />
      </div>
      <SheetTabs />
      <StatusBar />
    </div>
  );
}
